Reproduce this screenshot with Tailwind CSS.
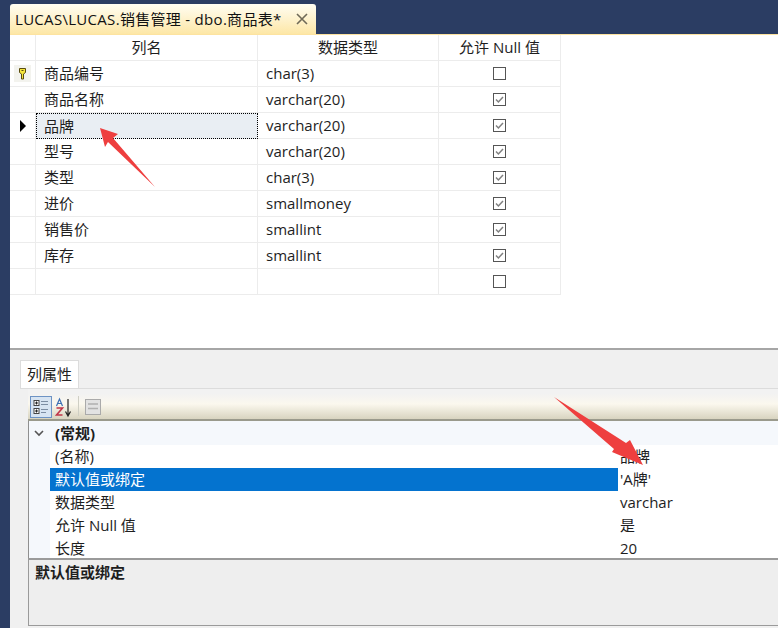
<!DOCTYPE html>
<html lang="zh">
<head>
<meta charset="UTF-8">
<title>dbo.商品表</title>
<script src="https://cdn.jsdelivr.net/npm/@tailwindcss/browser@4"></script>
</head>
<body class="w-[778px] h-[628px] overflow-hidden relative bg-[#2b3d63] text-[15px] text-[#1e1e1e] font-['Open_Sans','Noto_Sans_CJK_SC',sans-serif]">
<div class="flex flex-col h-full pl-[10px] pt-[4px]">
    <!-- Tab strip -->
    <div class="h-[30px] flex shrink-0">
        <div class="w-[306px] bg-[#fdeeb8] bg-gradient-to-b from-[#fffdf2] to-[#fde7a6] rounded-t-[3px] flex items-center pl-[5px] pr-[8px] justify-between text-[15px] tracking-[0.3px] text-[#111]">
            <span class="whitespace-nowrap">LUCAS\LUCAS.销售管理 - dbo.商品表*</span>
            <svg width="12" height="12" viewBox="0 0 12 12"><path d="M1 1L11 11M11 1L1 11" stroke="#6f6a58" stroke-width="1.6" fill="none"/></svg>
        </div>
    </div>
    <div class="h-[1px] bg-[#fde3a0] shrink-0"></div>

    <!-- Table designer -->
    <div class="h-[313px] bg-white shrink-0">
        <div class="grid grid-cols-[26px_222px_181px_122px] w-[551px] leading-none">
            <div class="h-[26px] border-r border-b border-[#ececec]"></div>
            <div class="h-[26px] border-r border-b border-[#ececec] flex items-center justify-center">列名</div>
            <div class="h-[26px] border-r border-b border-[#ececec] flex items-center justify-center">数据类型</div>
            <div class="h-[26px] border-r border-b border-[#ececec] flex items-center justify-center">允许 Null 值</div>

            <div class="h-[26px] border-r border-b border-[#ececec] flex items-center justify-center">
                <span class="w-[17px] h-[17px] bg-[#f3f3ee] flex items-center justify-center">
                    <svg width="9" height="13" viewBox="0 0 9 13"><path d="M1.5 1.5H7.5V5.5L5.5 7V12H3.5V7L1.5 5.5Z" fill="#f6e63c" stroke="#5a4c10"/><path d="M3.5 3.5H5.5" stroke="#5a4c10" fill="none"/></svg>
                </span>
            </div>
            <div class="h-[26px] border-r border-b border-[#ececec] flex items-center pl-[8px]">商品编号</div>
            <div class="h-[26px] border-r border-b border-[#ececec] flex items-center pl-[8px]">char(3)</div>
            <div class="h-[26px] border-r border-b border-[#ececec] flex items-center justify-center"><span class="w-[13px] h-[13px] border border-[#555] bg-white"></span></div>

            <div class="h-[26px] border-r border-b border-[#ececec]"></div>
            <div class="h-[26px] border-r border-b border-[#ececec] flex items-center pl-[8px]">商品名称</div>
            <div class="h-[26px] border-r border-b border-[#ececec] flex items-center pl-[8px]">varchar(20)</div>
            <div class="h-[26px] border-r border-b border-[#ececec] flex items-center justify-center"><svg width="13" height="13" viewBox="0 0 13 13"><rect x=".5" y=".5" width="12" height="12" fill="#fff" stroke="#555"/><path d="M3 6.5L5.4 9L10 4" stroke="#808080" stroke-width="1.5" fill="none"/></svg></div>

            <div class="h-[26px] border-r border-b border-[#ececec] flex items-center justify-center"><svg width="8" height="12" viewBox="0 0 8 12"><path d="M1 0L7 6L1 12Z" fill="#000"/></svg></div>
            <div class="h-[26px] border border-dotted border-black bg-[#e9eef3] flex items-center pl-[7px]">品牌</div>
            <div class="h-[26px] border-r border-b border-[#ececec] flex items-center pl-[8px]">varchar(20)</div>
            <div class="h-[26px] border-r border-b border-[#ececec] flex items-center justify-center"><svg width="13" height="13" viewBox="0 0 13 13"><rect x=".5" y=".5" width="12" height="12" fill="#fff" stroke="#555"/><path d="M3 6.5L5.4 9L10 4" stroke="#808080" stroke-width="1.5" fill="none"/></svg></div>

            <div class="h-[26px] border-r border-b border-[#ececec]"></div>
            <div class="h-[26px] border-r border-b border-[#ececec] flex items-center pl-[8px]">型号</div>
            <div class="h-[26px] border-r border-b border-[#ececec] flex items-center pl-[8px]">varchar(20)</div>
            <div class="h-[26px] border-r border-b border-[#ececec] flex items-center justify-center"><svg width="13" height="13" viewBox="0 0 13 13"><rect x=".5" y=".5" width="12" height="12" fill="#fff" stroke="#555"/><path d="M3 6.5L5.4 9L10 4" stroke="#808080" stroke-width="1.5" fill="none"/></svg></div>

            <div class="h-[26px] border-r border-b border-[#ececec]"></div>
            <div class="h-[26px] border-r border-b border-[#ececec] flex items-center pl-[8px]">类型</div>
            <div class="h-[26px] border-r border-b border-[#ececec] flex items-center pl-[8px]">char(3)</div>
            <div class="h-[26px] border-r border-b border-[#ececec] flex items-center justify-center"><svg width="13" height="13" viewBox="0 0 13 13"><rect x=".5" y=".5" width="12" height="12" fill="#fff" stroke="#555"/><path d="M3 6.5L5.4 9L10 4" stroke="#808080" stroke-width="1.5" fill="none"/></svg></div>

            <div class="h-[26px] border-r border-b border-[#ececec]"></div>
            <div class="h-[26px] border-r border-b border-[#ececec] flex items-center pl-[8px]">进价</div>
            <div class="h-[26px] border-r border-b border-[#ececec] flex items-center pl-[8px]">smallmoney</div>
            <div class="h-[26px] border-r border-b border-[#ececec] flex items-center justify-center"><svg width="13" height="13" viewBox="0 0 13 13"><rect x=".5" y=".5" width="12" height="12" fill="#fff" stroke="#555"/><path d="M3 6.5L5.4 9L10 4" stroke="#808080" stroke-width="1.5" fill="none"/></svg></div>

            <div class="h-[26px] border-r border-b border-[#ececec]"></div>
            <div class="h-[26px] border-r border-b border-[#ececec] flex items-center pl-[8px]">销售价</div>
            <div class="h-[26px] border-r border-b border-[#ececec] flex items-center pl-[8px]">smallint</div>
            <div class="h-[26px] border-r border-b border-[#ececec] flex items-center justify-center"><svg width="13" height="13" viewBox="0 0 13 13"><rect x=".5" y=".5" width="12" height="12" fill="#fff" stroke="#555"/><path d="M3 6.5L5.4 9L10 4" stroke="#808080" stroke-width="1.5" fill="none"/></svg></div>

            <div class="h-[26px] border-r border-b border-[#ececec]"></div>
            <div class="h-[26px] border-r border-b border-[#ececec] flex items-center pl-[8px]">库存</div>
            <div class="h-[26px] border-r border-b border-[#ececec] flex items-center pl-[8px]">smallint</div>
            <div class="h-[26px] border-r border-b border-[#ececec] flex items-center justify-center"><svg width="13" height="13" viewBox="0 0 13 13"><rect x=".5" y=".5" width="12" height="12" fill="#fff" stroke="#555"/><path d="M3 6.5L5.4 9L10 4" stroke="#808080" stroke-width="1.5" fill="none"/></svg></div>

            <div class="h-[26px] border-r border-b border-[#ececec]"></div>
            <div class="h-[26px] border-r border-b border-[#ececec]"></div>
            <div class="h-[26px] border-r border-b border-[#ececec]"></div>
            <div class="h-[26px] border-r border-b border-[#ececec] flex items-center justify-center"><span class="w-[13px] h-[13px] border border-[#555] bg-white"></span></div>
        </div>
    </div>

    <!-- Splitter -->
    <div class="h-[2px] bg-[#a6a6a6] shrink-0"></div>

    <!-- Column properties -->
    <div class="flex-1 min-h-0 bg-[#f0f0f0] pl-[10px] pt-[10px] flex flex-col">
        <div class="h-[28px] w-[59px] bg-white border border-b-0 border-[#dcdcdc] flex items-center justify-center shrink-0 leading-none">列属性</div>
        <div class="flex-1 min-h-0 border-t border-[#dcdcdc] pl-[8px] flex flex-col">
            <div class="h-[32px] shrink-0 pt-[7px] border-b-2 border-[#9a9a8c] bg-gradient-to-b from-[#f2f2f2] from-15% via-[#fbf8ee] to-[#d8d4c0] flex items-start pl-[2px] gap-[3px]">
                <span class="w-[22px] h-[22px] bg-[#d7e4f2] border border-[#6d93c4] flex items-center justify-center">
                    <svg width="18" height="18" viewBox="0 0 18 18"><rect x="2" y="2.5" width="5" height="5" fill="#fff" stroke="#444"/><rect x="2" y="10.5" width="5" height="5" fill="#fff" stroke="#444"/><path d="M3 5H6M4.5 3.5V6.5M3 13H6M4.5 11.5V14.5" stroke="#222" fill="none"/><path d="M9 3.5H16M9 6.5H16M9 11.5H16M9 14.5H14" stroke="#7c8da3" fill="none"/></svg>
                </span>
                <svg width="18" height="22" viewBox="0 0 18 22"><path d="M1.5 10L4.5 3L7.5 10M2.5 7.5H6.5" stroke="#3c6fb4" stroke-width="1.2" fill="none"/><path d="M1.5 12H7.5L1.5 19H7.5" stroke="#c0364a" stroke-width="1.6" fill="none"/><path d="M13 3V19M10.5 15.5L13 20L15.5 15.5" stroke="#222" stroke-width="1.2" fill="none"/></svg>
                <span class="w-px h-[20px] bg-[#cfcfc4] mx-[2px]"></span>
                <svg width="18" height="18" viewBox="0 0 18 18" class="mt-[2px]"><rect x="1.5" y="1.5" width="15" height="15" fill="#e2e2e2" stroke="#aaa"/><path d="M4 6H14M4 10.5H14" stroke="#b0b0b0" stroke-width="1.4" fill="none"/></svg>
            </div>
            <div class="h-[137px] shrink-0 bg-white border-l border-[#8f8f8f] overflow-hidden leading-none">
                <div class="h-[24px] bg-[#f5f8fc] flex items-center font-bold">
                    <svg width="10" height="7" viewBox="0 0 10 7" class="ml-[5px] mr-[11px]"><path d="M1 1L5 5L9 1" stroke="#555" stroke-width="1.6" fill="none"/></svg>
                    <span>(常规)</span>
                </div>
                <div class="grid grid-cols-[21px_568px_1fr]">
                    <div class="h-[23px] bg-[#f5f8fc]"></div>
                    <div class="h-[23px] pl-[5px] flex items-center">(名称)</div>
                    <div class="h-[23px] pl-[2px] flex items-center">品牌</div>
                    <div class="h-[23px] bg-[#f5f8fc]"></div>
                    <div class="h-[23px] pl-[5px] flex items-center bg-[#0473cf] text-white">默认值或绑定</div>
                    <div class="h-[23px] pl-[2px] flex items-center">'A牌'</div>
                    <div class="h-[23px] bg-[#f5f8fc]"></div>
                    <div class="h-[23px] pl-[5px] flex items-center">数据类型</div>
                    <div class="h-[23px] pl-[2px] flex items-center">varchar</div>
                    <div class="h-[23px] bg-[#f5f8fc]"></div>
                    <div class="h-[23px] pl-[5px] flex items-center">允许 Null 值</div>
                    <div class="h-[23px] pl-[2px] flex items-center">是</div>
                    <div class="h-[23px] bg-[#f5f8fc]"></div>
                    <div class="h-[23px] pl-[5px] flex items-center">长度</div>
                    <div class="h-[23px] pl-[2px] flex items-center">20</div>
                </div>
            </div>
            <div class="flex-1 min-h-0 mb-[2px] border-t-2 border-l border-b border-[#9a9a9a] bg-[#eeeeee] pl-[6px] pt-[5px] font-bold leading-none">默认值或绑定</div>
        </div>
    </div>
</div>

<!-- Annotation arrows -->
<svg class="absolute left-0 top-0 pointer-events-none" width="778" height="628" viewBox="0 0 778 628">
    <path d="M100 128L118 134L113 138L155 187L108 142L105 147Z" fill="#ee3f3f"/>
    <path d="M554 397L626 443L630 440L643 465L612 452L614 449Z" fill="#ee3f3f"/>
</svg>
</body>
</html>
